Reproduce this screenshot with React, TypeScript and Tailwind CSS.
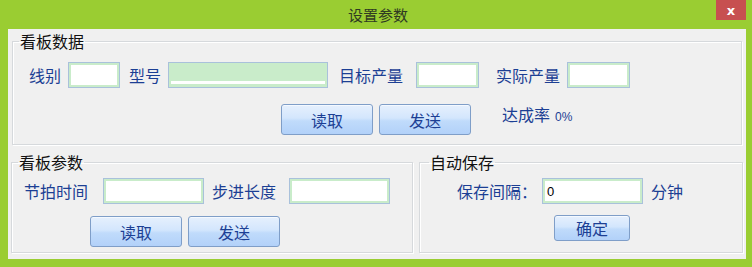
import React from "react";

const label = "text-[16px] leading-[20px] text-[#1c3f94] whitespace-nowrap";
const btn =
  "flex items-center justify-center rounded-[3px] border border-[#7f9ec8] bg-[linear-gradient(to_bottom,#e6f0fd_0%,#d3e6fd_45%,#c0dbfb_55%,#b2d1f9_100%)] text-[16px] leading-[20px] text-[#1c3f94] shadow-[inset_0_1px_0_#f4f9ff]";

function Box({ className, children }: { className: string; children?: React.ReactNode }) {
  return (
    <div
      className={
        "h-[26px] border border-[#a9c1db] bg-white shadow-[inset_0_0_0_2px_#c9ecca] flex items-center " +
        className
      }
    >
      {children}
    </div>
  );
}

function Group({
  title,
  legendClass,
  className,
  children,
}: {
  title: string;
  legendClass: string;
  className: string;
  children: React.ReactNode;
}) {
  return (
    <fieldset
      className={
        "border border-[#d6d9dc] shadow-[inset_1px_1px_0_#fff,1px_1px_0_#fff] " + className
      }
    >
      <legend className={"px-[1px] text-[16px] leading-[20px] text-[#111] " + legendClass}>
        {title}
      </legend>
      {children}
    </fieldset>
  );
}

export default function App() {
  return (
    <div className="w-[752px] h-[267px] bg-[#9acd32] flex flex-col font-['Noto_Sans_CJK_SC',sans-serif]">
      {/* title bar */}
      <div className="h-[29px] grid grid-cols-[1fr_auto_1fr] items-start">
        <div />
        <div className="pt-[6px] pl-[4px] text-[15px] leading-[18px] text-[#2f3a22]">设置参数</div>
        <div className="justify-self-end mr-[6px] w-[30px] h-[20px] bg-[#c75050] flex items-center justify-center text-white text-[13px] leading-none font-bold font-['DejaVu_Sans',sans-serif]">
          x
        </div>
      </div>

      <div className="ml-[8px] mr-[6px] h-[230px] bg-[#f0f0f0] flex flex-col">
        {/* 看板数据 */}
        <Group title="看板数据" legendClass="ml-[6px]" className="mt-[2px] mx-[4px] pt-[11px] pb-[9px]">
          <div className="flex items-center h-[26px]">
            <span className={label + " ml-[16px]"}>线别</span>
            <Box className="ml-[7px] w-[52px]" />
            <span className={label + " ml-[9px]"}>型号</span>
            <div className="ml-[7px] w-[160px] h-[26px] border border-[#a9c1db] bg-[#c9ecca] flex flex-col justify-end px-[2px] pb-[3px]">
              <div className="h-[3px] bg-white" />
            </div>
            <span className={label + " ml-[11px]"}>目标产量</span>
            <Box className="ml-[13px] w-[63px]" />
            <span className={label + " ml-[17px]"}>实际产量</span>
            <Box className="ml-[7px] w-[63px]" />
          </div>
          <div className="flex items-start mt-[16px]">
            <button className={btn + " ml-[268px] w-[92px] h-[31px]"}>读取</button>
            <button className={btn + " ml-[6px] w-[92px] h-[31px]"}>发送</button>
            <span className={label + " ml-[31px] flex items-baseline"}>
              达成率
              <span className="ml-[5px] text-[12px] font-['Liberation_Sans',sans-serif]">0%</span>
            </span>
          </div>
        </Group>

        <div className="flex mt-[7px]">
          {/* 看板参数 */}
          <Group title="看板参数" legendClass="ml-[6px]" className="ml-[3px] w-[402px] pt-[6px] pb-[5px]">
            <div className="flex items-center h-[26px]">
              <span className={label + " ml-[12px]"}>节拍时间</span>
              <Box className="ml-[15px] w-[101px]" />
              <span className={label + " ml-[8px]"}>步进长度</span>
              <Box className="ml-[13px] w-[101px]" />
            </div>
            <div className="flex mt-[12px]">
              <button className={btn + " ml-[78px] w-[92px] h-[31px]"}>读取</button>
              <button className={btn + " ml-[6px] w-[92px] h-[31px]"}>发送</button>
            </div>
          </Group>

          {/* 自动保存 */}
          <Group title="自动保存" legendClass="ml-[9px]" className="ml-[6px] w-[324px] pt-[6px] pb-[5px]">
            <div className="flex items-center h-[26px]">
              <span className={label + " ml-[37px]"}>保存间隔：</span>
              <Box className="ml-[5px] w-[101px]">
                <span className="ml-[4px] text-[13px] leading-none text-black font-['Liberation_Sans',sans-serif]">
                  0
                </span>
              </Box>
              <span className={label + " ml-[8px]"}>分钟</span>
            </div>
            <div className="flex mt-[11px]">
              <button className={btn + " ml-[134px] w-[76px] h-[26px]"}>确定</button>
            </div>
          </Group>
        </div>
      </div>
    </div>
  );
}
